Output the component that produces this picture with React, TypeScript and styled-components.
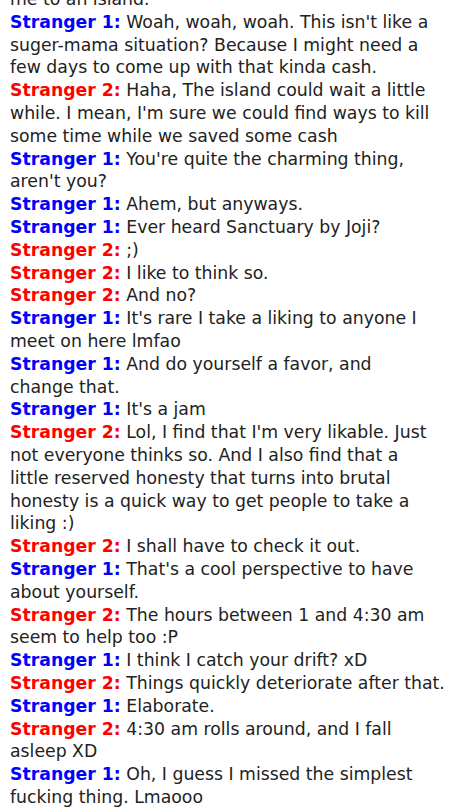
import React from "react";
import styled, { createGlobalStyle } from "styled-components";

const Global = createGlobalStyle`
  html, body { margin: 0; padding: 0; background: #ffffff; }
  body { font-family: "DejaVu Sans", sans-serif; overflow: hidden; }
`;

const Log = styled.div`
  display: flex;
  flex-direction: column;
  padding: 0 16.5px 0 10px;
  margin-top: -12px;
  font-family: "DejaVu Sans", sans-serif;
  font-size: 17.3px;
  line-height: 22.8px;
  color: #222222;
`;

const Line = styled.div<{ $nowrap?: boolean }>`
  margin: 0;
  white-space: ${(p) => (p.$nowrap ? "nowrap" : "normal")};
`;

const Who = styled.strong<{ $who: 1 | 2 }>`
  font-weight: bold;
  color: ${(p) => (p.$who === 1 ? "#0000ff" : "#ff0000")};
`;

type Msg = { who?: 1 | 2; text: string; nowrap?: boolean };

const messages: Msg[] = [
  { text: "me to an island." },
  { who: 1, text: "Woah, woah, woah. This isn't like a suger-mama situation? Because I might need a few days to come up with that kinda cash." },
  { who: 2, text: "Haha, The island could wait a little while. I mean, I'm sure we could find ways to kill some time while we saved some cash" },
  { who: 1, text: "You're quite the charming thing, aren't you?" },
  { who: 1, text: "Ahem, but anyways." },
  { who: 1, text: "Ever heard Sanctuary by Joji?" },
  { who: 2, text: ";)" },
  { who: 2, text: "I like to think so." },
  { who: 2, text: "And no?" },
  { who: 1, text: "It's rare I take a liking to anyone I meet on here lmfao" },
  { who: 1, text: "And do yourself a favor, and change that." },
  { who: 1, text: "It's a jam" },
  { who: 2, text: "Lol, I find that I'm very likable. Just not everyone thinks so. And I also find that a little reserved honesty that turns into brutal honesty is a quick way to get people to take a liking :)" },
  { who: 2, text: "I shall have to check it out." },
  { who: 1, text: "That's a cool perspective to have about yourself." },
  { who: 2, text: "The hours between 1 and 4:30 am seem to help too :P" },
  { who: 1, text: "I think I catch your drift? xD" },
  { who: 2, text: "Things quickly deteriorate after that.", nowrap: true },
  { who: 1, text: "Elaborate." },
  { who: 2, text: "4:30 am rolls around, and I fall asleep XD" },
  { who: 1, text: "Oh, I guess I missed the simplest fucking thing. Lmaooo" },
];

export default function App() {
  return (
    <>
      <Global />
      <Log>
        {messages.map((m, i) => (
          <Line key={i} $nowrap={m.nowrap}>
            {m.who ? <Who $who={m.who}>Stranger {m.who}:</Who> : null}
            {m.who ? " " : ""}
            {m.text}
          </Line>
        ))}
      </Log>
    </>
  );
}
